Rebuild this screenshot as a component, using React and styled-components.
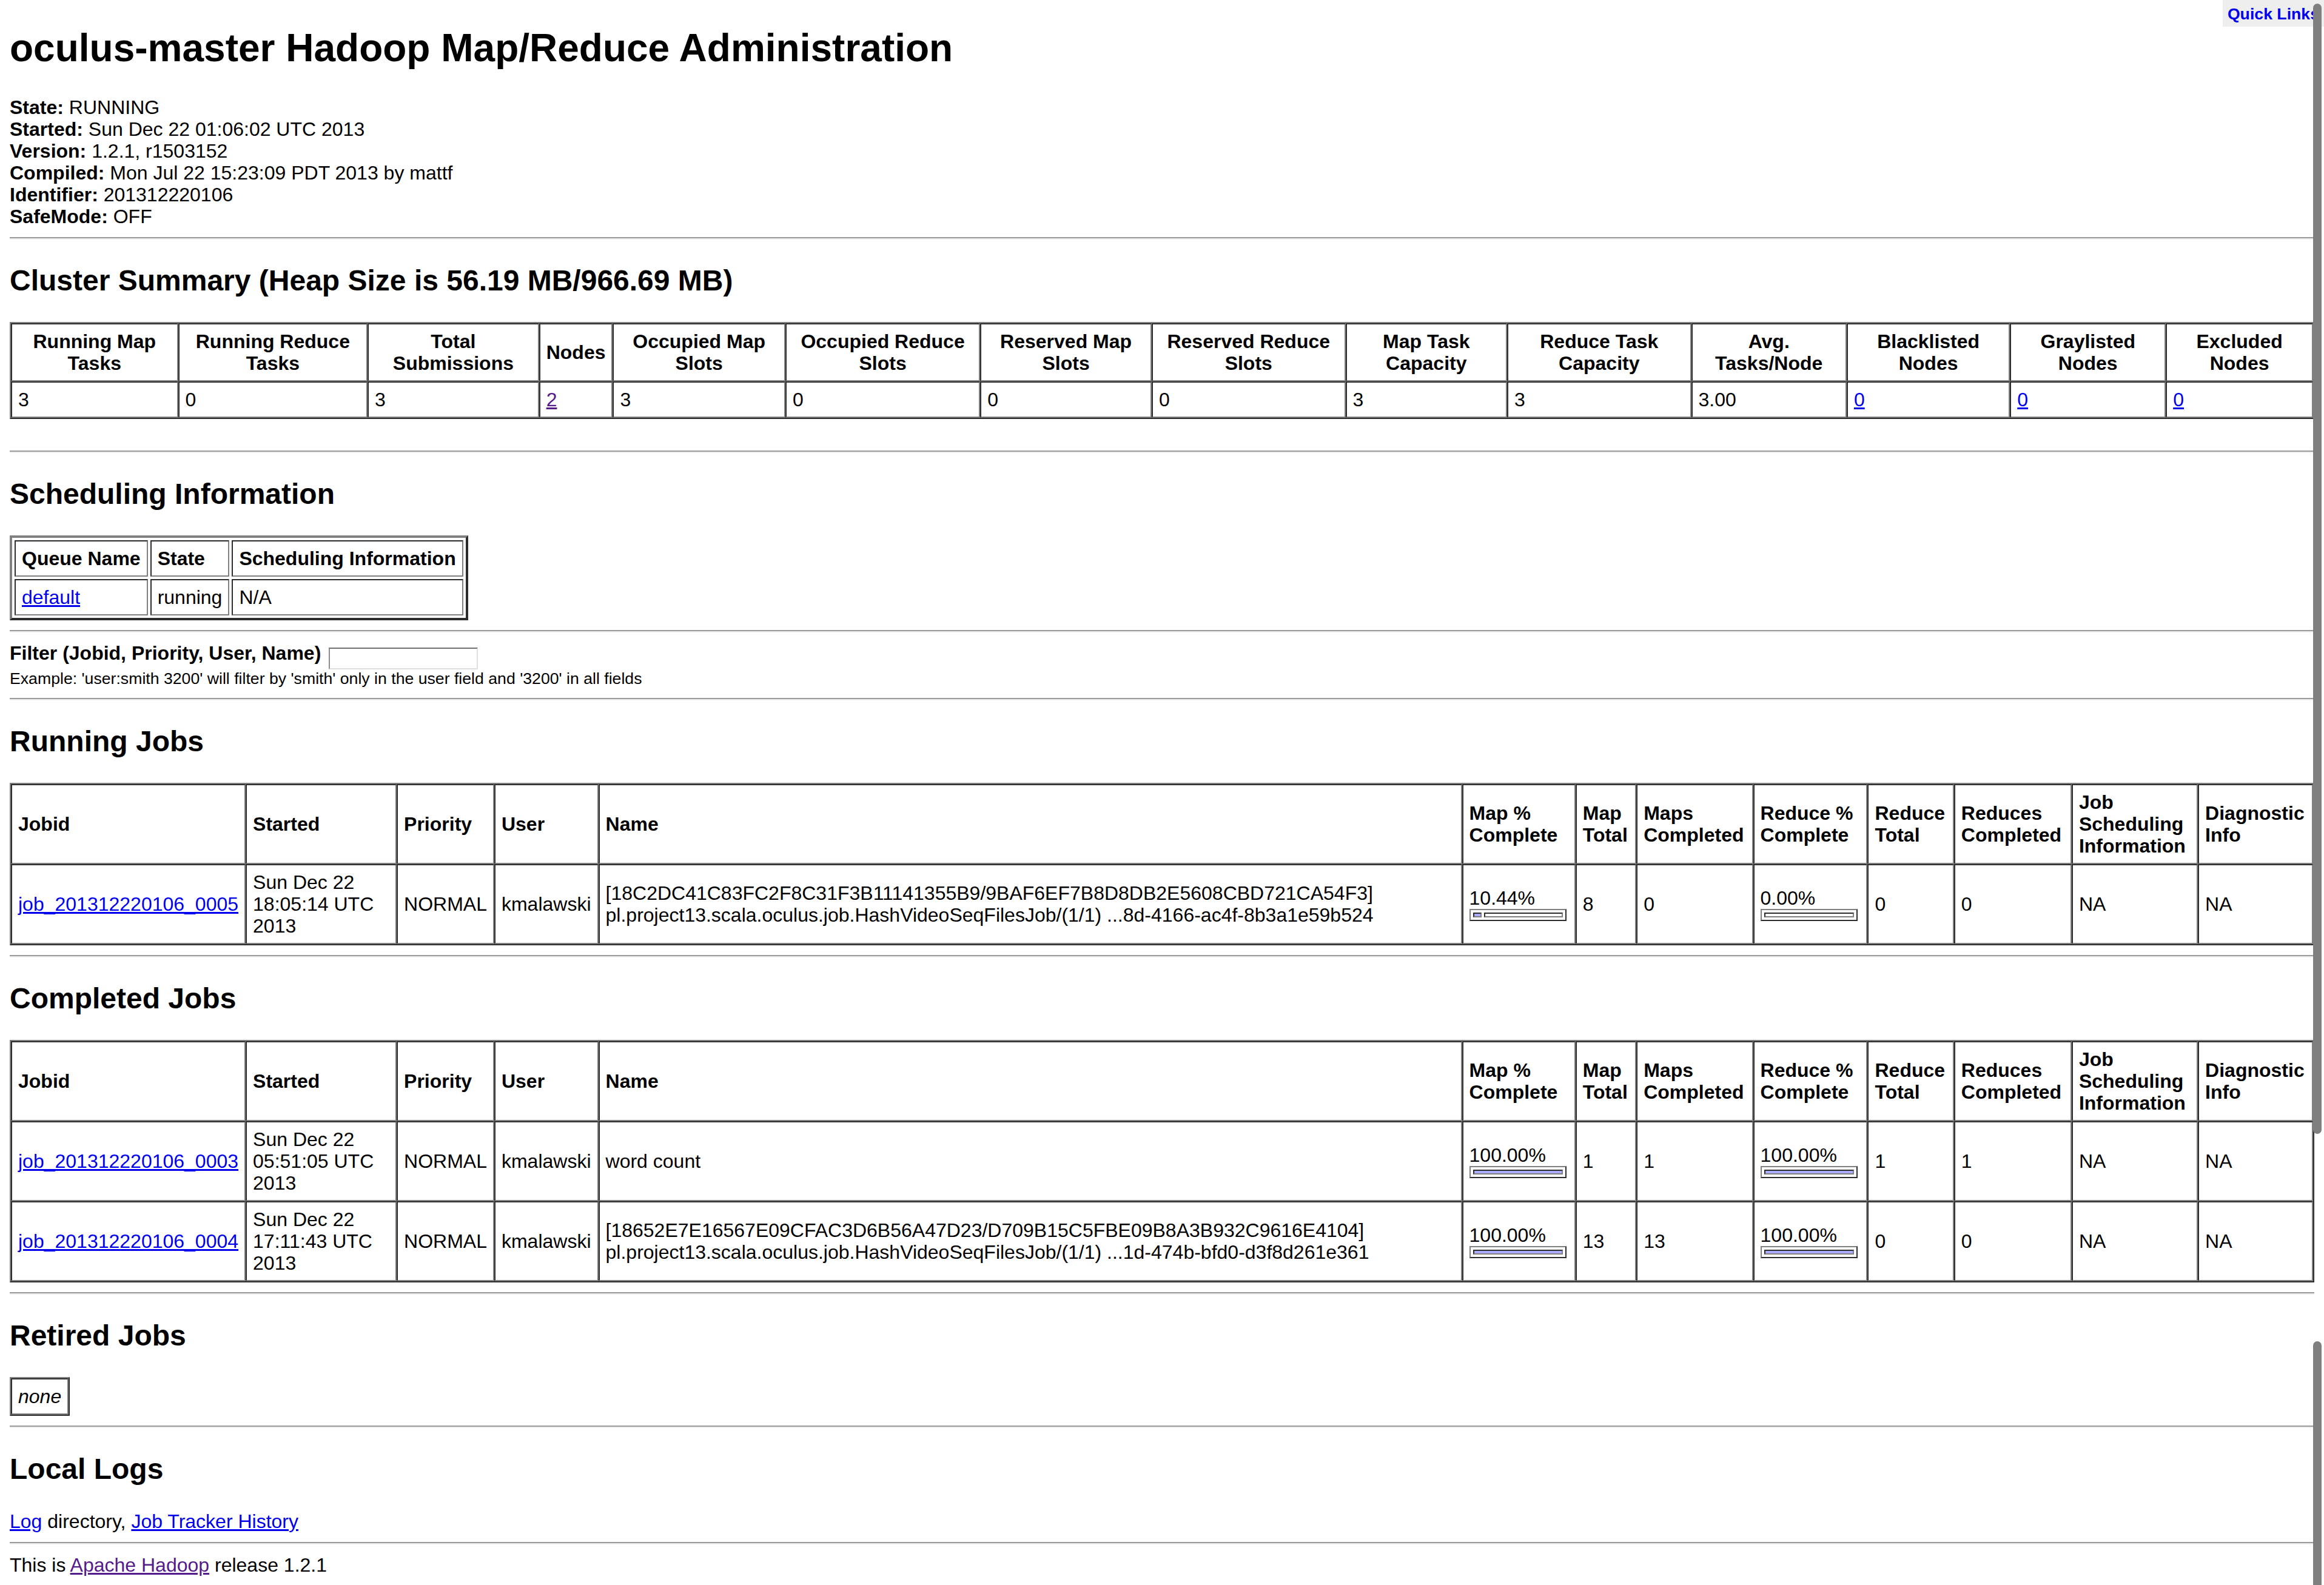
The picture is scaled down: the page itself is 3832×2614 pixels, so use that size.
import React from 'react'
import styled, { createGlobalStyle } from 'styled-components'

const GlobalStyle = createGlobalStyle`
  html, body {
    background: #ffffff;
  }
  body {
    margin: 0 16px 16px 16px;
    font-family: "Liberation Sans", Arial, Helvetica, sans-serif;
    font-size: 32px;
    line-height: 36px;
    color: #000;
  }
`

const Page = styled.div`
  display: block;
`

const QuickLinks = styled.div`
  position: fixed;
  top: 0;
  right: 0;
  margin: 0;
  padding: 4px 8px;
  background-color: #eee;
  font-weight: bold;
  text-align: right;
  line-height: 34px;
`

const QuickLink = styled.a`
  font-size: 26.67px;
  color: #0000ee;
  text-decoration: none;
`

const ScrollThumb = styled.div`
  position: fixed;
  right: 4px;
  width: 14px;
  top: ${p => p.top}px;
  height: ${p => p.len}px;
  background: #7f7f7f;
  border-radius: 7px;
  z-index: 5;
`

const Title = styled.h1`
  font-size: 64px;
  line-height: 74px;
  font-weight: bold;
  margin: 0 0 43px 0;
  padding-top: 42px;
`

const SectionTitle = styled.h2`
  font-size: 48px;
  line-height: 56px;
  font-weight: bold;
  margin: 40px 0;
`

const Rule = styled.hr`
  height: 0;
  margin: 16px 0;
  border: none;
  border-top: 2px solid #9a9a9a;
  border-bottom: 2px solid #eeeeee;
`

const Link = styled.a`
  color: ${p => (p.$visited ? '#551a8b' : '#0000ee')};
  text-decoration: underline;
`

const Grid = styled.table`
  border-collapse: separate;
  border-spacing: ${p => p.$spacing || 0}px;
  border: ${p => p.$frame || 2}px outset gray;
  width: ${p => (p.$full ? '100%' : 'auto')};
  font-size: 32px;
  line-height: 36px;
`

const HeadCell = styled.th`
  border: 2px inset gray;
  padding: 10px;
  font-weight: bold;
  text-align: ${p => p.$align || 'center'};
  vertical-align: middle;
  width: ${p => (p.$width ? `${p.$width}px` : 'auto')};
`

const Cell = styled.td`
  border: 2px inset gray;
  padding: 10px;
  text-align: ${p => p.$align || 'left'};
  vertical-align: middle;
  font-style: ${p => (p.$italic ? 'italic' : 'normal')};
`

const Bar = styled.table`
  width: 160px;
  border-collapse: separate;
  border-spacing: 4px;
  border: 2px outset gray;
`

const BarCell = styled.td`
  width: ${p => p.$pct}%;
  height: 0;
  padding: 2px;
  border: 2px inset gray;
  background-color: ${p => (p.$filled ? '#aaaaff' : '#ffffff')};
`

const FilterRow = styled.div`
  line-height: 36px;
`

const FilterInput = styled.input`
  width: 246px;
  height: 36px;
  box-sizing: border-box;
  margin: 0 0 0 4px;
  padding: 2px 4px;
  border: 2px inset #e0e0e0;
  border-top-color: #c4c4c4;
  font-size: 26px;
  vertical-align: -6px;
  background: #fff;
`

const Small = styled.div`
  font-size: 26.67px;
  line-height: 31px;
`

const summary = [
  ['Running Map Tasks', '3'],
  ['Running Reduce Tasks', '0'],
  ['Total Submissions', '3'],
  ['Nodes', '2', 'visited'],
  ['Occupied Map Slots', '3'],
  ['Occupied Reduce Slots', '0'],
  ['Reserved Map Slots', '0'],
  ['Reserved Reduce Slots', '0'],
  ['Map Task Capacity', '3'],
  ['Reduce Task Capacity', '3'],
  ['Avg. Tasks/Node', '3.00'],
  ['Blacklisted Nodes', '0', 'link'],
  ['Graylisted Nodes', '0', 'link'],
  ['Excluded Nodes', '0', 'link'],
]

// header label, content width (px) where the column needs a floor
const jobHeads = [
  ['Jobid'], ['Started', 225], ['Priority'], ['User'], ['Name', 1400], ['Map % Complete'],
  ['Map Total'], ['Maps Completed'], ['Reduce % Complete'], ['Reduce Total'],
  ['Reduces Completed'], ['Job Scheduling Information'], ['Diagnostic Info'],
]

const runningJobs = [
  {
    id: 'job_201312220106_0005',
    started: 'Sun Dec 22 18:05:14 UTC 2013',
    name: '[18C2DC41C83FC2F8C31F3B11141355B9/9BAF6EF7B8D8DB2E5608CBD721CA54F3] pl.project13.scala.oculus.job.HashVideoSeqFilesJob/(1/1) ...8d-4166-ac4f-8b3a1e59b524',
    mapPct: 10.44, mapTotal: 8, mapsDone: 0,
    redPct: 0, redTotal: 0, redsDone: 0,
  },
]

const completedJobs = [
  {
    id: 'job_201312220106_0003',
    started: 'Sun Dec 22 05:51:05 UTC 2013',
    name: 'word count',
    mapPct: 100, mapTotal: 1, mapsDone: 1,
    redPct: 100, redTotal: 1, redsDone: 1,
  },
  {
    id: 'job_201312220106_0004',
    started: 'Sun Dec 22 17:11:43 UTC 2013',
    name: '[18652E7E16567E09CFAC3D6B56A47D23/D709B15C5FBE09B8A3B932C9616E4104] pl.project13.scala.oculus.job.HashVideoSeqFilesJob/(1/1) ...1d-474b-bfd0-d3f8d261e361',
    mapPct: 100, mapTotal: 13, mapsDone: 13,
    redPct: 100, redTotal: 0, redsDone: 0,
  },
]

const Progress = ({ pct }) => {
  const perc = Math.floor(pct)
  return (
    <Bar>
      <tbody>
        <tr>
          {perc > 0 && <BarCell $filled $pct={perc} />}
          {perc < 100 && <BarCell $pct={100 - perc} />}
        </tr>
      </tbody>
    </Bar>
  )
}

const JobTable = ({ jobs }) => (
  <Grid $full>
    <thead>
      <tr>
        {jobHeads.map(([h, w]) => (
          <HeadCell key={h} $align="left" $width={w}>{h}</HeadCell>
        ))}
      </tr>
    </thead>
    <tbody>
      {jobs.map(job => (
        <tr key={job.id}>
          <Cell><Link href="#">{job.id}</Link></Cell>
          <Cell>{job.started}</Cell>
          <Cell>NORMAL</Cell>
          <Cell>kmalawski</Cell>
          <Cell>{job.name}</Cell>
          <Cell>{job.mapPct.toFixed(2)}%<Progress pct={job.mapPct} /></Cell>
          <Cell>{job.mapTotal}</Cell>
          <Cell>{job.mapsDone}</Cell>
          <Cell>{job.redPct.toFixed(2)}%<Progress pct={job.redPct} /></Cell>
          <Cell>{job.redTotal}</Cell>
          <Cell>{job.redsDone}</Cell>
          <Cell>NA</Cell>
          <Cell>NA</Cell>
        </tr>
      ))}
    </tbody>
  </Grid>
)

const App = () => {
  return (
    <Page>
      <GlobalStyle />
      <Title>oculus-master Hadoop Map/Reduce Administration</Title>
      <QuickLinks>
        <QuickLink href="#quicklinks">Quick Links</QuickLink>
      </QuickLinks>
      <ScrollThumb top={6} len={1864} />
      <ScrollThumb top={2212} len={420} />

      <b>State:</b> RUNNING<br />
      <b>Started:</b> Sun Dec 22 01:06:02 UTC 2013<br />
      <b>Version:</b> 1.2.1, r1503152<br />
      <b>Compiled:</b> Mon Jul 22 15:23:09 PDT 2013 by mattf<br />
      <b>Identifier:</b> 201312220106<br />
      <b>SafeMode:</b> OFF<br />
      <Rule />

      <SectionTitle>Cluster Summary (Heap Size is 56.19 MB/966.69 MB)</SectionTitle>
      <Grid>
        <tbody>
          <tr>
            {summary.map(([label]) => (
              <HeadCell key={label}>{label}</HeadCell>
            ))}
          </tr>
          <tr>
            {summary.map(([label, value, kind]) => (
              <Cell key={label}>
                {kind ? <Link href="#" $visited={kind === 'visited'}>{value}</Link> : value}
              </Cell>
            ))}
          </tr>
        </tbody>
      </Grid>
      <br />
      <Rule />

      <SectionTitle>Scheduling Information</SectionTitle>
      <Grid $spacing={4} $frame={4}>
        <tbody>
          <tr>
            <HeadCell $align="left">Queue Name</HeadCell>
            <HeadCell $align="left">State</HeadCell>
            <HeadCell $align="left">Scheduling Information</HeadCell>
          </tr>
          <tr>
            <Cell><Link href="#">default</Link></Cell>
            <Cell>running</Cell>
            <Cell>N/A</Cell>
          </tr>
        </tbody>
      </Grid>
      <Rule />

      <FilterRow>
        <b>Filter (Jobid, Priority, User, Name)</b> <FilterInput type="text" />
      </FilterRow>
      <Small>Example: 'user:smith 3200' will filter by 'smith' only in the user field and '3200' in all fields</Small>
      <Rule />

      <SectionTitle>Running Jobs</SectionTitle>
      <JobTable jobs={runningJobs} />
      <Rule />

      <SectionTitle>Completed Jobs</SectionTitle>
      <JobTable jobs={completedJobs} />
      <Rule />

      <SectionTitle>Retired Jobs</SectionTitle>
      <Grid>
        <tbody>
          <tr>
            <Cell $align="center" $italic>none</Cell>
          </tr>
        </tbody>
      </Grid>
      <Rule />

      <SectionTitle>Local Logs</SectionTitle>
      <Link href="#">Log</Link> directory, <Link href="#">Job Tracker History</Link>
      <Rule />
      This is <Link href="#" $visited>Apache Hadoop</Link> release 1.2.1
    </Page>
  )
}

export default App
